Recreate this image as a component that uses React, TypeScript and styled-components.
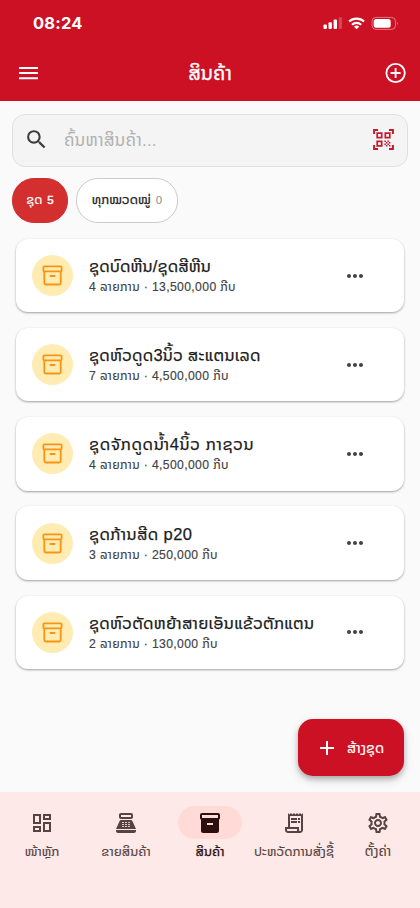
import React from "react";
import styled, { createGlobalStyle } from "styled-components";
import {
  MdAdd,
  MdInventory2,
  MdMoreHoriz,
  MdOutlineDashboard,
  MdOutlineReceiptLong,
  MdOutlineSettings,
  MdPointOfSale,
  MdSearch,
} from "react-icons/md";

const GlobalStyle = createGlobalStyle`
  * { box-sizing: border-box; }
  body {
    margin: 0;
    background: #fafafa;
    font-family: "Liberation Sans", "Noto Sans Lao", "DejaVu Sans", sans-serif;
  }
  svg { display: block; flex: none; }
`;

const Screen = styled.div`
  width: 420px;
  height: 908px;
  display: flex;
  flex-direction: column;
  background: #fafafa;
  overflow: hidden;
`;

const Header = styled.header`
  height: 101px;
  flex: none;
  background: #cc1124;
  color: #fff;
`;

const StatusBar = styled.div`
  height: 46px;
  padding: 0 21px 0 33px;
  display: flex;
  align-items: center;
  justify-content: space-between;
`;

const Clock = styled.span`
  font: 700 16.5px/20px Inter, sans-serif;
  letter-spacing: 0.2px;
`;

const AppBar = styled.div`
  height: 55px;
  padding: 0 13px 2px 19px;
  display: grid;
  grid-template-columns: 22px 1fr 22px;
  align-items: center;
`;

/* One line of text; $stroke thickens the strokes to a medium weight. */
const Line = styled.span<{ $size: number; $track?: number; $stroke?: number }>`
  font-size: ${(p) => p.$size}px;
  letter-spacing: ${(p) => p.$track ?? 0}px;
  -webkit-text-stroke: ${(p) => p.$stroke ?? 0}px currentColor;
  white-space: nowrap;
`;

const Title = styled(Line)`
  text-align: center;
  padding-right: 6px;
  line-height: 26px;
`;

const SearchBox = styled.div`
  flex: none;
  height: 53px;
  margin: 12.5px 12px 0;
  padding: 0 12px 1px 11px;
  display: flex;
  align-items: center;
  border: 1px solid #dfe1e1;
  border-radius: 13px;
  background: #f4f4f4;
  color: #3c3c3c;
`;

const Placeholder = styled(Line)`
  flex: 1;
  margin-left: 15px;
  padding-top: 2px;
  line-height: 24px;
  color: #b0b0b0;
`;

const Chips = styled.div`
  flex: none;
  display: flex;
  gap: 8px;
  padding: 11.5px 12px 0;
`;

const Chip = styled.div<{ $selected?: boolean; $width: number }>`
  width: ${(p) => p.$width}px;
  height: 45px;
  padding-bottom: 1px;
  display: flex;
  align-items: center;
  justify-content: center;
  gap: 5px;
  line-height: 20px;
  border-radius: 22px;
  border: 1px solid ${(p) => (p.$selected ? "#d32f2f" : "#cbcbcb")};
  background: ${(p) => (p.$selected ? "#d32f2f" : "#fff")};
  color: ${(p) => (p.$selected ? "#fff" : "#222")};
`;

const Count = styled(Line)<{ $selected?: boolean }>`
  color: ${(p) => (p.$selected ? "#fff" : "#8b8b8b")};
`;

const List = styled.main`
  flex: 1;
  display: flex;
  flex-direction: column;
  gap: 15.7px;
  padding: 15.8px 16px 0;
`;

const Card = styled.article`
  height: 73.5px;
  flex: none;
  display: flex;
  align-items: center;
  padding: 0 37px 0 16px;
  border-radius: 12px;
  background: #fff;
  box-shadow: 0 1px 2px rgba(0, 0, 0, 0.26), 0 1px 3px rgba(0, 0, 0, 0.12);
`;

const Avatar = styled.div`
  width: 41px;
  height: 41px;
  display: grid;
  place-items: center;
  border-radius: 50%;
  background: #ffecb3;
`;

const CardText = styled.div`
  flex: 1;
  display: flex;
  flex-direction: column;
  margin-left: 16px;
  padding-top: 3px;
  color: #1b1b1b;
`;

const Name = styled(Line)`
  line-height: 21px;
`;

const Detail = styled(Line)`
  line-height: 21px;
  color: #424242;
`;

const Dots = styled(MdMoreHoriz)`
  color: #424242;
`;

const CreateButton = styled.button`
  position: absolute;
  left: 298px;
  top: 719px;
  width: 106px;
  height: 57px;
  padding: 0 3px 0 0;
  display: flex;
  align-items: center;
  justify-content: center;
  gap: 8px;
  border: 0;
  border-radius: 15px;
  background: #cc1124;
  color: #fff;
  font-family: inherit;
  line-height: 20px;
  box-shadow: 0 3px 5px rgba(0, 0, 0, 0.2), 0 4px 10px rgba(0, 0, 0, 0.16);
`;

const NavBar = styled.nav`
  height: 116px;
  flex: none;
  display: grid;
  grid-template-columns: repeat(5, 84px);
  padding-top: 14px;
  background: #fdeae8;
`;

const NavItem = styled.div<{ $active?: boolean }>`
  display: flex;
  flex-direction: column;
  align-items: center;
  gap: 5px;
  color: ${(p) => (p.$active ? "#2c1010" : "#574343")};
  line-height: 16px;
`;

const Indicator = styled.div<{ $active?: boolean }>`
  width: 64px;
  height: 33px;
  display: grid;
  place-items: center;
  border-radius: 17px;
  background: ${(p) => (p.$active ? "#ffdad6" : "transparent")};
`;

const kits = [
  { name: "ຊຸດບົດຫີນ/ຊຸດສີຫີນ", detail: "4 ລາຍການ · 13,500,000 ກີບ", track: 0.07 },
  { name: "ຊຸດຫົວດູດ3ນິ້ວ ສະແຕນເລດ", detail: "7 ລາຍການ · 4,500,000 ກີບ", track: 0.2 },
  { name: "ຊຸດຈັກດູດນ້ຳ4ນິ້ວ ກາຊວນ", detail: "4 ລາຍການ · 4,500,000 ກີບ", track: 0.6 },
  { name: "ຊຸດກ້ານສີດ p20", detail: "3 ລາຍການ · 250,000 ກີບ", track: 0.35 },
  { name: "ຊຸດຫົວຕັດຫຍ້າສາຍເອັນແຂ້ວຕັກແຕນ", detail: "2 ລາຍການ · 130,000 ກີບ", track: 0.22 },
];

const tabs = [
  { label: "ໜ້າຫຼັກ", Icon: MdOutlineDashboard, size: 13.2 },
  { label: "ຂາຍສິນຄ້າ", Icon: MdPointOfSale, size: 13.2 },
  { label: "ສິນຄ້າ", Icon: MdInventory2, size: 13.2, active: true },
  { label: "ປະຫວັດການສັ່ງຊື້", Icon: MdOutlineReceiptLong, size: 13.1 },
  { label: "ຕັ້ງຄ່າ", Icon: MdOutlineSettings, size: 13.5 },
];

const StatusIcons = () => (
  <svg width="78" height="16" viewBox="0 0 78 16" fill="#fff">
    <rect x="2.5" y="9.5" width="3.4" height="4.5" rx="1" />
    <rect x="7.5" y="7.3" width="3.4" height="6.7" rx="1" />
    <rect x="12.6" y="4.5" width="3.4" height="9.5" rx="1" />
    <rect x="17.7" y="2.3" width="3.4" height="11.7" rx="1" opacity=".22" />
    <g fill="none" stroke="#fff" strokeWidth="2.1">
      <path d="M28.1 6.6a11 11 0 0 1 15 0" />
      <path d="M31 9.7a6.8 6.8 0 0 1 9.2 0" />
    </g>
    <path d="M33 11.7a3.8 3.8 0 0 1 5.2 0L35.6 14.3z" />
    <rect x="51" y="2.4" width="23.5" height="12" rx="4" fill="none" stroke="#fff" opacity=".42" />
    <rect x="52.7" y="4.1" width="17" height="8.6" rx="2.5" />
    <path d="M76 6.5q1.7 1.9 0 3.8z" opacity=".5" />
  </svg>
);

const MenuIcon = () => (
  <svg width="19" height="14" viewBox="0 0 19 14" fill="#fff">
    <path d="M0 .9h19v2H0zM0 6.1h19v2H0zM0 11.3h19v2H0z" />
  </svg>
);

const AddCircle = () => (
  <svg width="22" height="22" viewBox="0 0 22 22" fill="none" stroke="#fff" strokeWidth="1.8">
    <circle cx="10.6" cy="11" r="9.2" />
    <path d="M10.6 6v10M5.6 11h10" />
  </svg>
);

const ScanIcon = () => (
  <svg width="23" height="23" viewBox="0 0 23 23" fill="none" stroke="#c41a30">
    <path strokeWidth="2" d="M2.1 6V2.1H6M17 2.1h3.9V6M2.1 17v3.9H6M17 20.9h3.9V17" />
    <path strokeWidth="1.7" d="M5.2 5.2h4.5v4.5H5.2zM13.3 5.2h4.500v4.500h-4.500zM5.200 13.300h4.500v4.500H5.200z" />
    <path
      fill="#c41a30"
      stroke="none"
      d="M12.4 12.4h1.5v1.5h-1.500zM15.400 12.400h1.500v1.500h-1.500zM13.900 13.900h1.500v1.500h-1.500zM16.900 13.900h1.500v1.500h-1.500zM12.400 15.400h1.500v1.500h-1.500zM15.400 15.400h1.500v1.500h-1.500zM13.900 16.900h1.500v1.500h-1.500zM16.900 16.900h1.500v1.500h-1.500z"
    />
  </svg>
);

const BoxIcon = () => (
  <svg width="21" height="21" viewBox="0 0 21 21" fill="none" stroke="#fb9410" strokeWidth="1.8">
    <rect x="1.4" y="1.4" width="18.2" height="4.9" rx="1" />
    <path d="M2.3 6.3v11.7q0 1.5 1.5 1.5h13.4q1.5 0 1.5-1.5V6.3M7.7 11h5.6" />
  </svg>
);

export default function App() {
  return (
    <Screen>
      <GlobalStyle />
      <Header>
        <StatusBar>
          <Clock>08:24</Clock>
          <StatusIcons />
        </StatusBar>
        <AppBar>
          <MenuIcon />
          <Title $size={20} $stroke={0.3}>ສິນຄ້າ</Title>
          <AddCircle />
        </AppBar>
      </Header>
      <SearchBox>
        <MdSearch size={25} />
        <Placeholder $size={17} $track={0.25}>ຄົ້ນຫາສິນຄ້າ...</Placeholder>
        <ScanIcon />
      </SearchBox>
      <Chips>
        <Chip $selected $width={56}>
          <Line $size={12.8} $stroke={0.2}>ຊຸດ</Line>
          <Count $size={11.5} $stroke={0.4} $selected>5</Count>
        </Chip>
        <Chip $width={102}>
          <Line $size={13} $stroke={0.25}>ທຸກໝວດໝູ່</Line>
          <Count $size={11.5}>0</Count>
        </Chip>
      </Chips>
      <List>
        {kits.map((kit) => (
          <Card key={kit.name}>
            <Avatar>
              <BoxIcon />
            </Avatar>
            <CardText>
              <Name $size={16.5} $track={kit.track} $stroke={0.25}>{kit.name}</Name>
              <Detail $size={12.2} $track={0.36} $stroke={0.15}>{kit.detail}</Detail>
            </CardText>
            <Dots size={24} />
          </Card>
        ))}
      </List>
      <CreateButton>
        <MdAdd size={24} />
        <Line $size={14.4} $stroke={0.2}>ສ້າງຊຸດ</Line>
      </CreateButton>
      <NavBar>
        {tabs.map(({ label, Icon, size, active }) => (
          <NavItem key={label} $active={active}>
            <Indicator $active={active}>
              <Icon size={24} />
            </Indicator>
            <Line $size={size} $stroke={active ? 0.3 : 0.15}>{label}</Line>
          </NavItem>
        ))}
      </NavBar>
    </Screen>
  );
}
